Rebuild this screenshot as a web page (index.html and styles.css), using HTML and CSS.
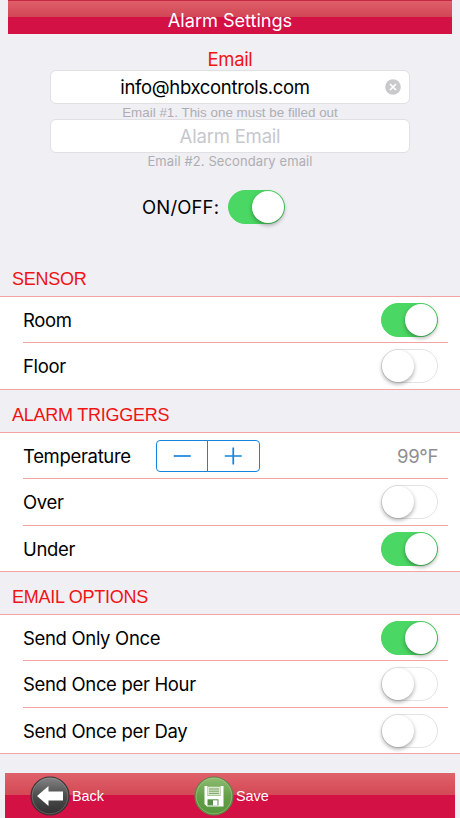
FILE: index.html
```html
<!DOCTYPE html>
<html lang="en">
<head>
    <meta charset="UTF-8">
    <meta name="viewport" content="width=device-width, initial-scale=1.0">
    <title>Alarm Settings</title>
    <link rel="stylesheet" href="styles.css">
</head>
<body>
    <header class="title-bar">
        <h1>Alarm Settings</h1>
    </header>

    <main>
        <div class="email">
            <h2>Email</h2>
            <div class="field">
                <span class="address">info@hbxcontrols.com</span>
                <svg class="clear" viewBox="0 0 16 16">
                    <circle cx="8" cy="8" r="7.8" fill="#c9c9cc"/>
                    <path d="M5 5l6 6M11 5l-6 6" stroke="#fff" stroke-width="1.7"/>
                </svg>
            </div>
            <p class="hint">Email #1. This one must be filled out</p>
            <div class="field placeholder"><span>Alarm Email</span></div>
            <p class="hint hint-second">Email #2. Secondary email</p>
        </div>

        <div class="power">
            <span>ON/OFF:</span>
            <div class="switch on"></div>
        </div>

        <section class="sensor">
            <h3>SENSOR</h3>
            <ul>
                <li><span>Room</span><div class="switch on"></div></li>
                <li><span>Floor</span><div class="switch"></div></li>
            </ul>
        </section>

        <section class="triggers">
            <h3>ALARM TRIGGERS</h3>
            <ul>
                <li>
                    <span>Temperature</span>
                    <div class="stepper">
                        <svg viewBox="0 0 18 18"><path d="M0.5 9h17"/></svg>
                        <svg viewBox="0 0 18 18"><path d="M0.5 9h17M9 0.5v17"/></svg>
                    </div>
                    <span class="value">99°F</span>
                </li>
                <li><span>Over</span><div class="switch"></div></li>
                <li><span>Under</span><div class="switch on"></div></li>
            </ul>
        </section>

        <section class="options">
            <h3>EMAIL OPTIONS</h3>
            <ul>
                <li><span>Send Only Once</span><div class="switch on"></div></li>
                <li><span>Send Once per Hour</span><div class="switch"></div></li>
                <li><span>Send Once per Day</span><div class="switch"></div></li>
            </ul>
        </section>
    </main>

    <footer class="toolbar">
        <div class="tool back">
            <svg viewBox="0 0 40 40">
                <defs>
                    <linearGradient id="dark" x1="0" y1="0" x2="0" y2="1">
                        <stop offset="0" stop-color="#858585"/>
                        <stop offset="0.5" stop-color="#4c4c4c"/>
                        <stop offset="1" stop-color="#303030"/>
                    </linearGradient>
                </defs>
                <circle cx="20" cy="20" r="19" fill="url(#dark)" stroke="#3b3335" stroke-width="1.2"/>
                <circle cx="20" cy="20" r="17.8" fill="none" stroke="#999" stroke-opacity="0.5" stroke-width="0.8"/>
                <path d="M7 20L18.5 10v5.5H33v9H18.5V30z" fill="#fff"/>
            </svg>
            <span>Back</span>
        </div>
        <div class="tool save">
            <svg viewBox="0 0 40 40">
                <defs>
                    <linearGradient id="green" x1="0" y1="0" x2="0" y2="1">
                        <stop offset="0" stop-color="#8fbd72"/>
                        <stop offset="0.5" stop-color="#659f49"/>
                        <stop offset="1" stop-color="#55963a"/>
                    </linearGradient>
                </defs>
                <circle cx="20" cy="20" r="19" fill="url(#green)" stroke="#64804b" stroke-width="1.2"/>
                <circle cx="20" cy="20" r="17.8" fill="none" stroke="#acd38e" stroke-opacity="0.6" stroke-width="0.8"/>
                <path d="M10.5 10h19v20.5H13l-2.5-2.5z" fill="#fff"/>
                <path d="M13.5 10h13v10h-13z" fill="#86b36c"/>
                <path d="M14 10.8h12v8.6H14z" fill="#d9e8ce"/>
                <path d="M15 13h10M15 15.2h10M15 17.4h10" stroke="#6c9c52" stroke-width="0.9"/>
                <path d="M13.5 23.3h11v6.2h-11z" fill="#559044"/>
                <path d="M19 24.3h4.5v5.2H19z" fill="#fff"/>
            </svg>
            <span>Save</span>
        </div>
    </footer>
</body>
</html>
```
FILE: styles.css
```css
* {
    box-sizing: border-box;
}
body {
    margin: 0;
    height: 818px;
    display: flex;
    flex-direction: column;
    overflow: hidden;
    background-color: #efeff4;
    color: #000;
    font-family: Inter, "Liberation Sans", sans-serif;
    font-size: 18.5px;
    letter-spacing: -0.33px;
}
h1, h2, h3, p, ul {
    margin: 0;
    padding: 0;
    font-weight: 400;
}
main {
    flex: 1;
}
.title-bar {
    height: 34px;
    margin: 0 8px;
    border-top: 1px solid #c42843;
    background: linear-gradient(#df5f69 0, #d14654 16px, #d31145 16px, #d31145 100%);
    color: #fff;
    text-align: center;
}
h1 {
    padding-top: 3px;
    font-size: 18.2px;
    line-height: 32px;
    letter-spacing: -0.05px;
}
.email {
    width: 360px;
    margin: 0 auto;
    text-align: center;
}
h2 {
    height: 36px;
    padding-top: 13px;
    color: #f01414;
    font-size: 18.5px;
    line-height: 24px;
}
.field {
    position: relative;
    height: 34px;
    border: 1px solid #e0e0e3;
    border-radius: 6px;
    background: #fff;
    line-height: 32px;
}
.address {
    padding-right: 30px;
}
.clear {
    position: absolute;
    top: 8px;
    right: 8px;
    width: 16px;
    height: 16px;
}
.placeholder {
    color: #c7c7cd;
    letter-spacing: -0.2px;
}
.hint {
    height: 15px;
    color: #aeaeb2;
    font-family: "Liberation Sans", Arial, sans-serif;
    font-size: 13.4px;
    line-height: 17px;
    letter-spacing: 0;
}
.hint-second {
    font-family: Inter, "Liberation Sans", sans-serif;
    font-size: 13px;
    letter-spacing: 0.1px;
}
.power {
    display: flex;
    align-items: center;
    gap: 9px;
    height: 34px;
    margin: 22px 0 0 142px;
    letter-spacing: 0.15px;
}
.switch {
    flex: none;
    display: flex;
    align-items: center;
    width: 57px;
    height: 34px;
    border: 1.5px solid #e3e3e5;
    border-radius: 17px;
    background: #fff;
}
.switch::before {
    content: "";
    width: 32px;
    height: 32px;
    border-radius: 50%;
    background: #fff;
    box-shadow: 0 2px 4px rgba(0, 0, 0, 0.35);
}
.switch.on {
    justify-content: flex-end;
    border-color: #4bd763;
    background: #4bd763;
}
section h3 {
    padding-left: 12px;
    color: #f01414;
    font-family: "Liberation Sans", Arial, sans-serif;
    font-size: 18px;
    line-height: 20px;
    letter-spacing: -0.25px;
}
.sensor h3 {
    height: 72px;
    padding-top: 45px;
}
.triggers h3, .options h3 {
    height: 42px;
    padding-top: 15px;
}
ul {
    list-style: none;
    border-top: 1px solid #f3a3a3;
    border-bottom: 1px solid #f3a3a3;
    background: #fff;
}
li {
    display: flex;
    align-items: center;
    justify-content: space-between;
    height: 46px;
    margin: 0 12px 0 23px;
    padding-right: 10px;
    border-bottom: 1px solid #f3a3a3;
}
li:nth-child(2) {
    height: 47px;
}
li:last-child {
    height: 46px;
    border-bottom: 0;
}
li:nth-child(3) {
    height: 45px;
}
.stepper {
    display: flex;
    width: 104px;
    height: 32px;
    margin: 0 auto 0 25px;
    border: 1px solid #1583e0;
    border-radius: 4px;
}
.stepper svg {
    flex: 1;
    height: 18px;
    margin: 6px 0;
    fill: none;
    stroke: #1583e0;
    stroke-width: 1.7;
}
.stepper svg + svg {
    height: 30px;
    margin: 0;
    padding: 6px 0;
    border-left: 1px solid #1583e0;
}
.value {
    color: #8e8e93;
}
.toolbar {
    display: flex;
    height: 45px;
    margin: 0 5px;
    background: linear-gradient(#df626b 0, #d34855 22.5px, #d31145 22.5px, #d31145 100%);
    color: #fff;
    font-family: "Liberation Sans", Arial, sans-serif;
    font-size: 14.4px;
    letter-spacing: 0;
}
.tool {
    display: flex;
    align-items: center;
    gap: 2px;
    width: 164px;
}
.tool svg {
    width: 40px;
    height: 40px;
}
.back {
    margin-left: 25px;
}
```
